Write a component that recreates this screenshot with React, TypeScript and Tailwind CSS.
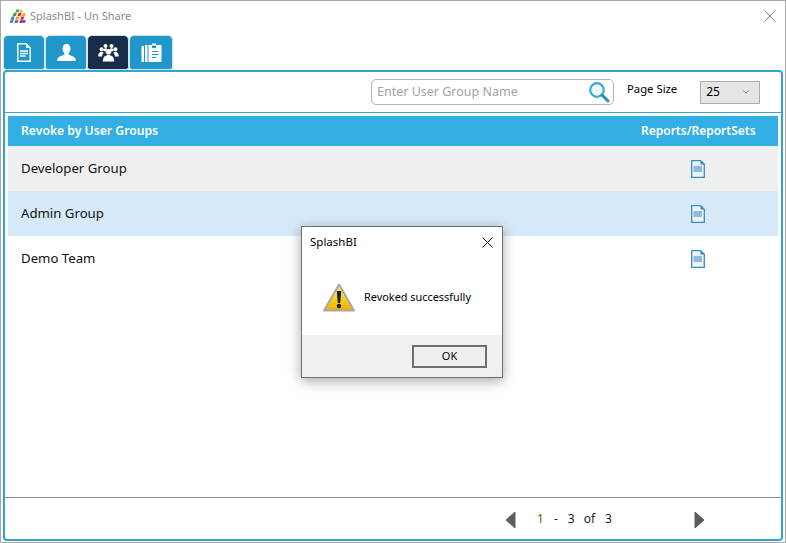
import React, { FC } from 'react';
import { ChevronDown } from 'lucide-react';

const font = 'font-["Noto_Sans",sans-serif]';

const Logo: FC = () => (
  <svg width="18" height="15" viewBox="0 0 17 14">
    <path d="M6 3l1-2.500h3L9 3z" fill="#5a9e3c" />
    <path d="M10 3l1-2h2l-1 2z" fill="#d9a224" />
    <path d="M3.500 6.500l1-3h3l-1 3z" fill="#4a9a3a" />
    <path d="M8 6.500l1-3h3l-1 3z" fill="#d8322a" />
    <path d="M12 6.500l1-2.500h3l-1 2.500z" fill="#e8a820" />
    <path d="M1.500 10l1-3h3l-1 3z" fill="#2f86d0" />
    <path d="M6 10l1-3h3l-1 3z" fill="#e8a020" />
    <path d="M10.500 10l1-3h3l-1 3z" fill="#d8322a" />
    <path d="M.5 13l1-2.500h3l-1 2.500z" fill="#2f76c0" />
    <path d="M5 13l1-2.500h3l-1 2.500z" fill="#8a3aa0" />
    <path d="M9.500 13l1-2.500h5.500l-1 2.500z" fill="#70308a" />
  </svg>
);

const DocIcon: FC = () => (
  <svg width="14" height="19" viewBox="0 0 14 19" fill="none">
    <path d="M.8.800h8.400l4 4v13.400H.800z" stroke="#fff" strokeWidth="1.400" />
    <path d="M9 1v4h4.500z" fill="#fff" />
    <path d="M3 8h8M3 10.500h8M3 13h5.500" stroke="#fff" strokeWidth="1.300" />
  </svg>
);

const UserIcon: FC = () => (
  <svg width="19" height="17" viewBox="0 0 20 18" fill="#fff">
    <path d="M10 0c2.600 0 4.200 2 4.200 4.800 0 2-.8 3.800-2 5v1.600c2.500 1 7.800 2 7.800 6.600H0c0-4.600 5.300-5.600 7.800-6.600V9.800c-1.200-1.200-2-3-2-5C5.800 2 7.400 0 10 0z" />
  </svg>
);

const GroupIcon: FC = () => (
  <svg width="21" height="19" viewBox="0 0 21 19" fill="#fff">
    <circle cx="3.600" cy="6.200" r="2" />
    <circle cx="17.400" cy="6.200" r="2" />
    <circle cx="7.500" cy="3" r="2" />
    <circle cx="13.500" cy="3" r="2" />
    <path d="M.2 13.500c0-3.200 1.300-4.800 3.400-4.800 1 0 1.600.3 2.100.9-1 1.200-1.500 2.400-1.600 3.900zM20.800 13.500c0-3.200-1.300-4.800-3.400-4.800-1 0-1.600.3-2.100.9 1 1.200 1.500 2.400 1.600 3.900z" />
    <path d="M5.200 7.500c.4-1.500 1.300-2.200 2.300-2.200s1.500.4 1.600 1c-.8.600-1.200 1.300-1.300 2.100-.9 0-1.700-.3-2.600-.9zM15.800 7.500c-.4-1.500-1.300-2.200-2.300-2.200s-1.500.4-1.600 1c.8.600 1.200 1.300 1.300 2.100.9 0 1.700-.3 2.600-.9z" />
    <circle cx="10.500" cy="8.800" r="2.800" />
    <path d="M4.800 18.500c0-4.500 2.500-6.600 5.700-6.600s5.700 2.100 5.700 6.600z" />
  </svg>
);

const ClipIcon: FC = () => (
  <svg width="21" height="20" viewBox="0 0 21 20" fill="none">
    <path d="M.5 3H3v16H.5zM4 2h2.500v17H4z" fill="#fff" />
    <path d="M7.500 2H11V.5h4V2h5.500v17h-13z" fill="#fff" />
    <path d="M11 2.500h4v2.500h-4z" fill="#1f97cb" />
    <path d="M11 8.500h6.500M11 11.500h6.500M11 14.500h4" stroke="#1f97cb" strokeWidth="1.200" />
  </svg>
);

const SearchIcon: FC = () => (
  <svg width="22" height="22" viewBox="0 0 22 22" fill="none">
    <circle cx="9" cy="9" r="6.800" fill="#eef8fc" stroke="#3aa7d3" strokeWidth="2.200" />
    <path d="M14 14l6 6" stroke="#2a8dbc" strokeWidth="3" strokeLinecap="round" />
  </svg>
);

const RowDoc: FC = () => (
  <svg width="14" height="18" viewBox="0 0 14 18" fill="none">
    <path d="M.7.700h9l3.600 3.600v13H.700z" fill="#eef5fa" stroke="#3a8cbd" strokeWidth="1.300" />
    <path d="M9.500 0.500v4h4z" fill="#3a8cbd" />
    <rect x="2.500" y="6" width="8.500" height="6" fill="#8cbcd9" />
  </svg>
);

const WarnIcon: FC = () => (
  <svg width="32" height="30" viewBox="0 0 32 30">
    <defs>
      <linearGradient id="warnFill" x1="0" y1="0" x2="0" y2="1">
        <stop offset="0" stopColor="#fdec8a" />
        <stop offset="0.55" stopColor="#fbcf1e" />
        <stop offset="1" stopColor="#f0b000" />
      </linearGradient>
    </defs>
    <path d="M16 1.500L31 27.500H1z" fill="url(#warnFill)" stroke="#a8a8a8" strokeWidth="2" strokeLinejoin="round" />
    <path d="M13.800 8h4.400l-1 12h-2.400z" fill="#1c1c1c" />
    <circle cx="16" cy="23" r="2.200" fill="#1c1c1c" />
  </svg>
);

const rows = [
  { name: 'Developer Group', cls: 'bg-[#efefef]' },
  { name: 'Admin Group', cls: 'bg-[#d6e9f8]' },
  { name: 'Demo Team', cls: 'bg-white' },
];

const tabCls = 'h-[35px] rounded-t-[5px] rounded-b-[3px] flex items-center justify-center border border-[#d5e3ea]';

const App: FC = () => {
  return (
    <div className={`relative w-[786px] h-[543px] bg-white border border-[#a9a9a9] flex flex-col overflow-hidden ${font}`}>
      {/* title bar */}
      <div className="h-[30px] flex items-center pl-[8px] pr-[9px] shrink-0">
        <Logo />
        <span className="ml-[3px] text-[11px] text-[#8a8a8a]">SplashBI - Un Share</span>
        <svg className="ml-auto -mt-[1px]" width="12" height="12" viewBox="0 0 12 12" stroke="#8a8a8a" fill="none">
          <path d="M.5.500l11 11M11.500.500l-11 11" />
        </svg>
      </div>

      {/* tabs */}
      <div className="h-[39px] flex items-start pt-[4px] pl-[2px] shrink-0">
        <div className={`${tabCls} w-[42px] bg-[#1f97cb]`}><DocIcon /></div>
        <div className={`${tabCls} w-[42px] bg-[#1f97cb]`}><UserIcon /></div>
        <div className={`${tabCls} w-[42px] bg-[#162e49]`}><GroupIcon /></div>
        <div className={`${tabCls} w-[44px] bg-[#1f97cb]`}><ClipIcon /></div>
      </div>

      {/* panel */}
      <div className="mx-[2px] mb-[1px] flex-1 border-2 border-[#31a5cf] rounded-[4px] flex flex-col min-h-0">
        <div className="h-[40px] flex items-center shrink-0 pl-[366px]">
          <div className="w-[243px] h-[26px] border border-[#b5b5b5] rounded-[5px] flex items-center pl-[5px] pr-[3px]">
            <span className="text-[12.500px] text-[#a2a2a2]">Enter User Group Name</span>
            <span className="ml-auto"><SearchIcon /></span>
          </div>
          <span className="ml-[13px] text-[11.300px] text-black -mt-[5px]">Page Size</span>
          <div className="ml-[23px] w-[60px] h-[23px] bg-[#e5e5e5] border border-[#adadad] flex items-center pl-[5px] pr-[8px] text-[12px] text-black">
            25
            <ChevronDown className="ml-auto" size={10} strokeWidth={1.500} color="#444" />
          </div>
        </div>
        <div className="h-px bg-[#31a5cf] shrink-0" />

        <div className="flex-1 px-[3px] pt-[3px] min-h-0">
          <div className="h-[30px] bg-[#33afe6] flex items-center pl-[13px] text-white text-[12.200px] font-semibold">
            <span>Revoke by User Groups</span>
            <span className="ml-auto w-[137px] text-[12px]">Reports/ReportSets</span>
          </div>
          {rows.map((r) => (
            <div key={r.name} className={`h-[45px] flex items-center pl-[13px] text-[13.200px] text-[#111] ${r.cls}`}>
              <span>{r.name}</span>
              <span className="ml-auto w-[87px] flex"><RowDoc /></span>
            </div>
          ))}
        </div>

        <div className="h-px bg-[#7f8f98] shrink-0" />
        <div className="h-[41px] shrink-0 flex items-center pl-[500px] text-[12px] text-[#222]">
          <svg className="mt-[2px]" width="11" height="16" viewBox="0 0 11 16"><path d="M10 0v16L1 8z" fill="#5c5c5c" stroke="#5c5c5c" strokeLinejoin="round" /></svg>
          <span className="ml-[21px] text-[#7d4a10]">1</span>
          <span className="ml-[10px]">-</span>
          <span className="ml-[10px]">3</span>
          <span className="ml-[9px]">of</span>
          <span className="ml-[10px]">3</span>
          <svg className="mt-[2px] ml-[82px]" width="11" height="16" viewBox="0 0 11 16"><path d="M1 0v16l9-8z" fill="#5c5c5c" stroke="#5c5c5c" strokeLinejoin="round" /></svg>
        </div>
      </div>

      {/* message box */}
      <div className="absolute left-[300px] top-[225px] w-[202px] h-[152px] bg-white border border-[#6f6f6f] shadow-[0_3px_12px_rgba(0,0,0,0.35)] flex flex-col">
        <div className="h-[30px] flex items-center pl-[8px] pr-[9px] text-[11.500px] text-black shrink-0">
          <span>SplashBI</span>
          <svg className="ml-auto" width="11" height="11" viewBox="0 0 11 11" stroke="#111" fill="none">
            <path d="M.5.500l10 10M10.500.500l-10 10" />
          </svg>
        </div>
        <div className="flex-1 flex items-center pl-[21px] pt-[3px]">
          <WarnIcon />
          <span className="ml-[9px] text-[10.900px] text-black">Revoked successfully</span>
        </div>
        <div className="h-[42px] bg-[#f0f0f0] flex items-center justify-end pr-[15px] shrink-0">
          <div className="w-[75px] h-[23px] bg-[#efefef] border-2 border-[#6e6e6e] flex items-center justify-center text-[11px] text-black">OK</div>
        </div>
      </div>
    </div>
  );
};

export default App;
